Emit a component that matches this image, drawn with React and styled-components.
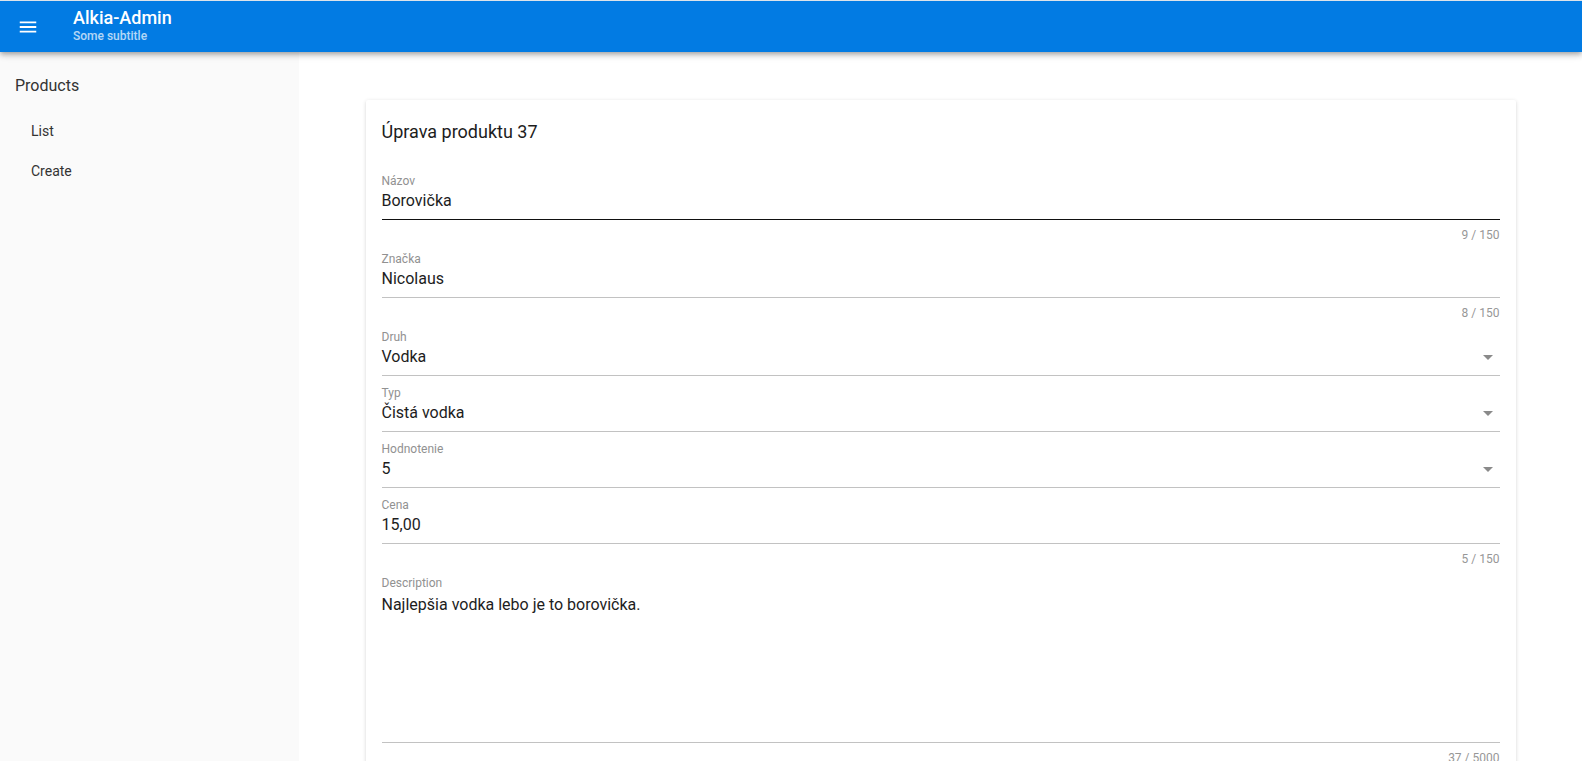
import styled, { createGlobalStyle } from 'styled-components';

const GlobalStyle = createGlobalStyle`
    body {
        margin: 0;
        font-family: Roboto, "Liberation Sans", sans-serif;
        background: #fff;
        color: rgba(0, 0, 0, 0.87);
    }
    * { box-sizing: border-box; }
`

const Header = styled.header`
    position: relative;
    z-index: 2;
    height: 52px;
    border-top: 1px solid #dde3ea;
    background: #027be3;
    color: #fff;
    display: flex;
    align-items: center;
    box-shadow: 0 2px 4px -1px rgba(0,0,0,.2), 0 4px 5px rgba(0,0,0,.14), 0 1px 10px rgba(0,0,0,.12);
`

const MenuButton = styled.div`
    width: 56px;
    height: 51px;
    display: flex;
    align-items: center;
    justify-content: center;
`

const TitleBlock = styled.div`
    display: flex;
    flex-direction: column;
    margin-left: 17px;
    margin-top: -1px;
`

const Title = styled.div`
    font-size: 18px;
    font-weight: 500;
    line-height: 20px;
`

const Subtitle = styled.div`
    font-size: 12px;
    font-weight: 500;
    line-height: 16px;
    opacity: 0.7;
`

const Layout = styled.div`
    display: flex;
    min-height: calc(100vh - 52px);
`

const Sidebar = styled.nav`
    width: 299px;
    flex-shrink: 0;
    background: #fafafa;
    padding-top: 10px;
`

const GroupTitle = styled.div`
    height: 49px;
    line-height: 48px;
    padding-left: 15px;
    font-size: 16px;
    color: #333;
`

const NavItem = styled.div`
    height: 40px;
    line-height: 40px;
    padding-left: 31px;
    font-size: 14px;
    color: #333;
`

const Main = styled.main`
    flex: 1;
    padding: 48px 0 0;
`

const Card = styled.div`
    width: 1150px;
    margin: 0 auto;
    background: #fff;
    border-radius: 2px;
    box-shadow: 0 1px 4px rgba(0,0,0,.14), 0 1px 2px rgba(0,0,0,.06);
`

const CardTitle = styled.div`
    padding: 16px;
    font-size: 18px;
    line-height: 32px;
    color: #1d1d1d;
`

const Form = styled.div`
    padding: 0 16px;
`

const Control = styled.div`
    height: ${props => props.height || 56}px;
    border-bottom: 1px solid ${props => props.focused ? '#111' : '#c2c2c2'};
    padding-top: 10px;
    display: flex;
    align-items: flex-start;
`

const ControlInner = styled.div`
    flex: 1;
`

const Label = styled.div`
    font-size: 12px;
    line-height: 14px;
    color: #919191;
`

const Value = styled.div`
    margin-top: 3px;
    font-size: 16px;
    line-height: ${props => props.multiline ? 24 : 20}px;
    color: #1d1d1d;
`

const Arrow = styled.svg`
    width: 24px;
    height: 24px;
    margin-top: 15px;
    fill: #8a8a8a;
`

const Bottom = styled.div`
    height: 22px;
    padding-top: 9px;
    text-align: right;
    font-size: 12px;
    line-height: 12px;
    color: #979797;
`

const Field = ({ label, value, counter, select, focused, height, multiline }) => (
    <div>
        <Control focused={focused} height={height}>
            <ControlInner>
                <Label>{label}</Label>
                <Value multiline={multiline}>{value}</Value>
            </ControlInner>
            {select && (
                <Arrow viewBox="0 0 24 24"><path d="M7 10l5 5 5-5z" /></Arrow>
            )}
        </Control>
        {counter && <Bottom>{counter}</Bottom>}
    </div>
)

const App = () => {
    return (
        <>
            <GlobalStyle />
            <Header>
                <MenuButton>
                    <svg width="22" height="22" viewBox="0 0 24 24" fill="#fff">
                        <path d="M3 18h18v-2H3v2zm0-5h18v-2H3v2zm0-7v2h18V6H3z" />
                    </svg>
                </MenuButton>
                <TitleBlock>
                    <Title>Alkia-Admin</Title>
                    <Subtitle>Some subtitle</Subtitle>
                </TitleBlock>
            </Header>
            <Layout>
                <Sidebar>
                    <GroupTitle>Products</GroupTitle>
                    <NavItem>List</NavItem>
                    <NavItem>Create</NavItem>
                </Sidebar>
                <Main>
                    <Card>
                        <CardTitle>Úprava produktu 37</CardTitle>
                        <Form>
                            <Field label="Názov" value="Borovička" counter="9 / 150" focused />
                            <Field label="Značka" value="Nicolaus" counter="8 / 150" />
                            <Field label="Druh" value="Vodka" select />
                            <Field label="Typ" value="Čistá vodka" select />
                            <Field label="Hodnotenie" value="5" select />
                            <Field label="Cena" value="15,00" counter="5 / 150" />
                            <Field label="Description" value="Najlepšia vodka lebo je to borovička." counter="37 / 5000" height={177} multiline />
                        </Form>
                    </Card>
                </Main>
            </Layout>
        </>
    )
}

export default App
